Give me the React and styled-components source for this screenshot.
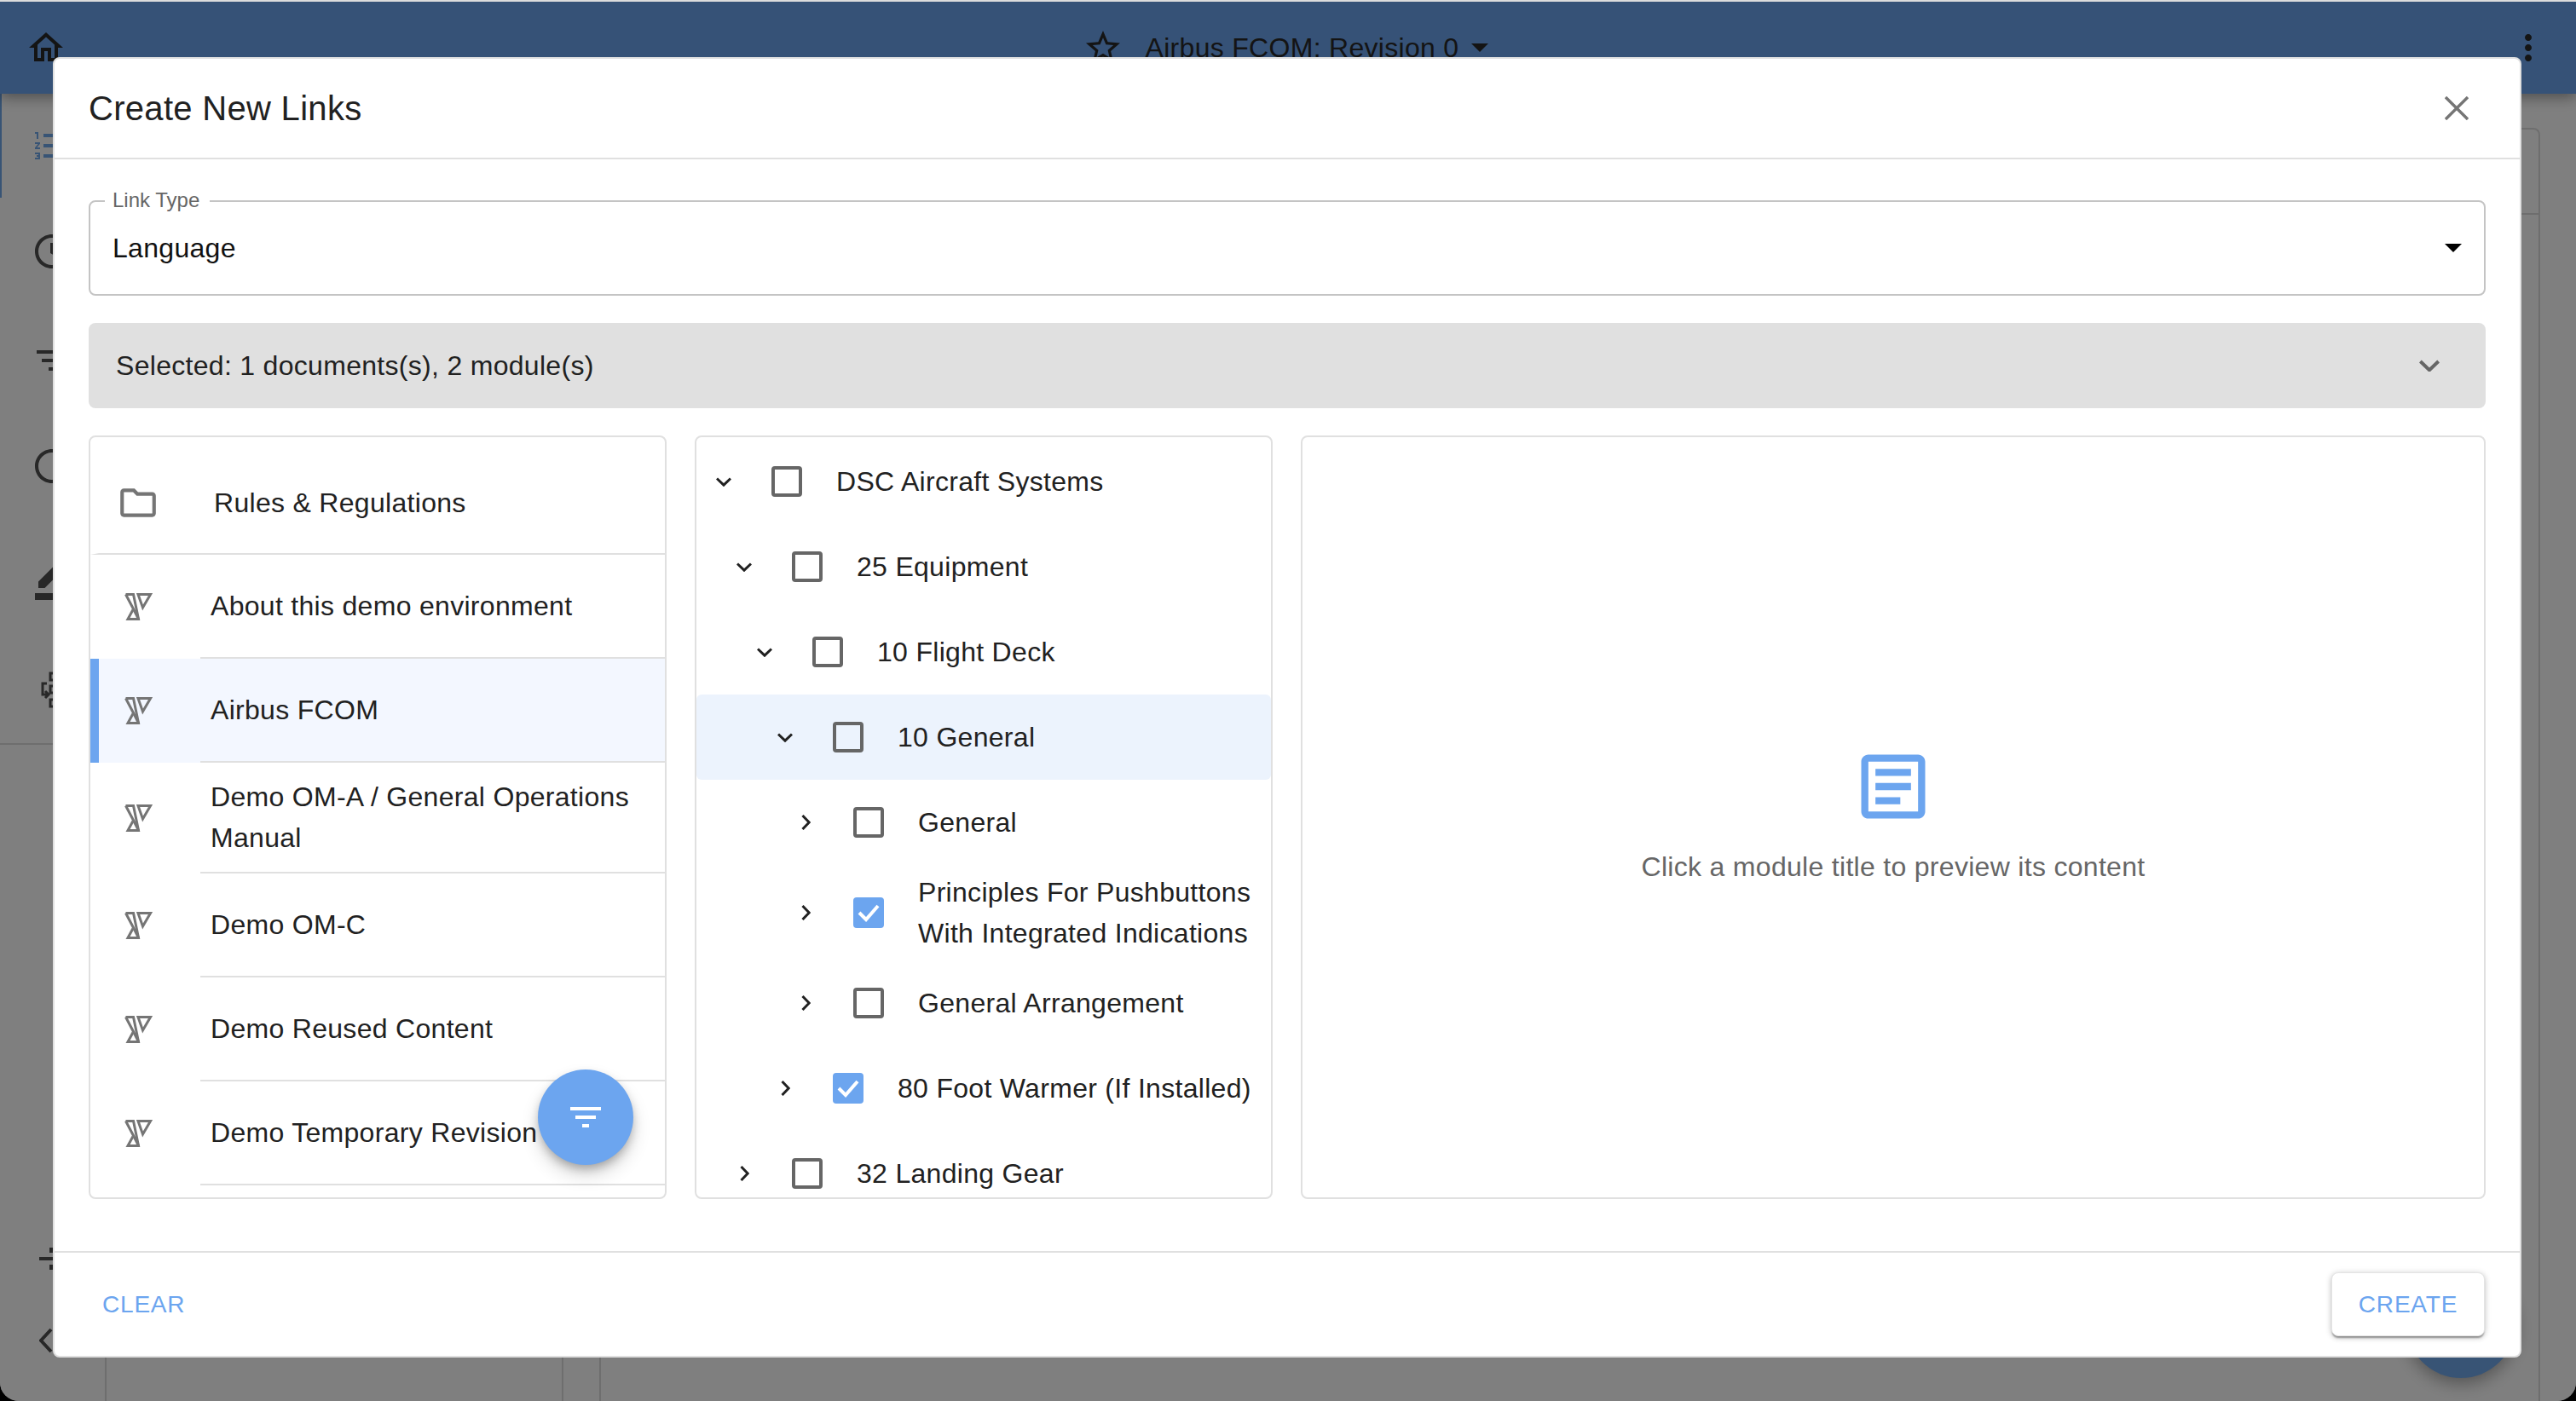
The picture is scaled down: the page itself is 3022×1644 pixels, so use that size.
import React from "react";
import styled, { createGlobalStyle } from "styled-components";

const GlobalStyle = createGlobalStyle`
  * {
    margin: 0;
    padding: 0;
    box-sizing: border-box;
  }

  html, body {
    width: 3022px;
    height: 1644px;
    overflow: hidden;
    background: #000;
    font-family: "Liberation Sans", Arial, sans-serif;
    color: #212121;
  }
`;

const blue = "#6ca5ef";
const line = "#e0e0e0";

const Page = styled.div`
  position: relative;
  width: 3022px;
  height: 1644px;
  display: flex;
  flex-direction: column;
  overflow: hidden;
  background: #fff;
  border-top: 2px solid #dcdcdc;
  border-radius: 0 0 22px 22px;
`;

const AppBar = styled.header`
  height: 108px;
  flex: none;
  display: flex;
  align-items: center;
  justify-content: space-between;
  padding: 0 32px 0 30px;
  background: ${blue};
  color: #282828;
  box-shadow: 0 4px 16px rgba(0, 0, 0, 0.4);
  position: relative;
`;

const DocTitle = styled.div`
  display: flex;
  align-items: center;
  margin-right: 4px;
  font-size: 32px;
  letter-spacing: 0.3px;

  span {
    margin: 0 15px 0 26px;
  }
`;

const Main = styled.main`
  flex: 1;
  display: flex;
  min-height: 0;
`;

const Sidebar = styled.nav`
  width: 125px;
  flex: none;
  display: flex;
  flex-direction: column;
  border-right: 2px solid #dcdcdc;
`;

const SideItem = styled.div`
  height: ${(p) => p.$h}px;
  flex: none;
  display: flex;
  align-items: center;
  padding-left: 35px;
  color: ${(p) => (p.$active ? "#70a8ea" : "#505050")};
  border-left: 2px solid ${(p) => (p.$active ? "#70a8ea" : "transparent")};
`;

const SideFoot = styled.div`
  margin-top: 8px;
  border-top: 2px solid #dcdcdc;
  flex: 1;
  display: flex;
  flex-direction: column;
  justify-content: flex-end;
  padding: 0 0 56px 46px;
  gap: 66px;
  color: #505050;
`;

const ListColumn = styled.section`
  width: 536px;
  flex: none;
  border-right: 2px solid #dcdcdc;
`;

const ContentCard = styled.section`
  flex: 1;
  margin: 40px 42px 0;
  border: 2px solid #dcdcdc;
  border-bottom: 0;
  border-radius: 8px 8px 0 0;
`;

const CardHead = styled.div`
  height: 100px;
  border-bottom: 2px solid #dcdcdc;
`;

const PageFab = styled.div`
  position: absolute;
  left: 2823px;
  top: 1487px;
  width: 128px;
  height: 128px;
  border-radius: 50%;
  background: #70a8ea;
  box-shadow: 0 6px 20px rgba(0, 0, 0, 0.35);
`;

const Backdrop = styled.div`
  position: absolute;
  inset: 0;
  display: flex;
  padding: 65px 64px 51px 62px;
  background: rgba(0, 0, 0, 0.5);
`;

const Dialog = styled.div`
  flex: 1;
  display: flex;
  flex-direction: column;
  background: #fff;
  border: 2px solid ${line};
  border-radius: 8px;
`;

const DialogHead = styled.div`
  height: 118px;
  flex: none;
  display: flex;
  align-items: center;
  justify-content: space-between;
  padding: 0 60px 0 40px;
  border-bottom: 2px solid ${line};

  h2 {
    font-size: 40px;
    font-weight: 400;
    letter-spacing: 0.3px;
  }
`;

const DialogBody = styled.div`
  flex: none;
  display: flex;
  flex-direction: column;
  gap: 32px;
  padding: 48px 40px 0;
`;

const SelectField = styled.div`
  position: relative;
  height: 112px;
  flex: none;
  display: flex;
  align-items: center;
  justify-content: space-between;
  padding: 0 26px 0 26px;
  border: 2px solid #c4c4c4;
  border-radius: 8px;
  font-size: 32px;
  letter-spacing: 0.3px;
  color: #111;

  legend {
    position: absolute;
    left: 17px;
    top: -18px;
    padding: 0 12px 0 9px;
    background: #fff;
    font-size: 24px;
    line-height: 32px;
    letter-spacing: 0;
    color: #666;
  }
`;

const Caret = styled.i`
  width: 0;
  height: 0;
  border-left: 10px solid transparent;
  border-right: 10px solid transparent;
  border-top: 10px solid ${(p) => p.$color || "#000"};
`;

const SummaryBar = styled.div`
  height: 100px;
  flex: none;
  display: flex;
  align-items: center;
  justify-content: space-between;
  padding: 0 54px 0 32px;
  background: ${line};
  border-radius: 8px;
  font-size: 32px;
  letter-spacing: 0.3px;
`;

const Panels = styled.div`
  height: 896px;
  flex: none;
  display: grid;
  grid-template-columns: 678px 678px 1fr;
  gap: 33px;
`;

const Panel = styled.div`
  position: relative;
  border: 2px solid ${line};
  border-radius: 8px;
  overflow: hidden;
  min-width: 0;
`;

const DocRow = styled.div`
  display: flex;
  align-items: stretch;
  height: ${(p) => p.$h}px;
  padding-top: ${(p) => (p.$full ? "17px" : "0")};
  background: ${(p) => (p.$selected ? "#f3f7ff" : "transparent")};
  border-left: 10px solid ${(p) => (p.$selected ? blue : "transparent")};
  border-bottom: ${(p) => (p.$full ? `2px solid ${line}` : "0")};
`;

const DocIcon = styled.div`
  width: ${(p) => (p.$wide ? 145 : 129)}px;
  flex: none;
  display: flex;
  align-items: center;
  padding-left: ${(p) => (p.$wide ? 31 : 39)}px;
  margin-left: -10px;
`;

const DocLabel = styled.div`
  flex: 1;
  display: flex;
  align-items: center;
  padding: 0 24px 0 ${(p) => (p.$wide ? 0 : 12)}px;
  font-size: 32px;
  line-height: 48px;
  letter-spacing: 0.3px;
  border-bottom: ${(p) => (p.$full ? "0" : `2px solid ${line}`)};
`;

const FilterFab = styled.button`
  position: absolute;
  left: 525px;
  top: 742px;
  width: 112px;
  height: 112px;
  border: 0;
  border-radius: 50%;
  display: flex;
  align-items: center;
  justify-content: center;
  background: ${blue};
  color: #fff;
  box-shadow: 0 6px 12px -2px rgba(0, 0, 0, 0.3), 0 12px 20px 2px rgba(0, 0, 0, 0.12);
`;

const TreeList = styled.div`
  padding-top: 2px;
`;

const TreeRow = styled.div`
  display: flex;
  align-items: center;
  min-height: ${(p) => (p.$tall ? 112 : 100)}px;
  padding: 0 16px 0 ${(p) => 16 + p.$level * 24}px;
  background: ${(p) => (p.$selected ? "#ecf3fd" : "transparent")};
  border-radius: 6px;
`;

const Chevron = styled.div`
  width: 32px;
  flex: none;
  display: flex;
  justify-content: center;
  color: #212121;
`;

const Box = styled.div`
  width: 36px;
  height: 36px;
  flex: none;
  margin: 0 40px 0 40px;
  display: flex;
  align-items: center;
  justify-content: center;
  border-radius: 4px;
  border: ${(p) => (p.$checked ? "0" : "4px solid #666")};
  background: ${(p) => (p.$checked ? blue : "transparent")};
`;

const TreeLabel = styled.div`
  font-size: 32px;
  line-height: 48px;
  letter-spacing: 0.3px;
`;

const Preview = styled.div`
  height: 100%;
  display: flex;
  flex-direction: column;
  align-items: center;
  justify-content: center;
  gap: 20px;
  padding-bottom: 4px;
  color: ${blue};

  p {
    font-size: 32px;
    line-height: 48px;
    letter-spacing: 0.3px;
    color: #666;
  }
`;

const DialogFoot = styled.div`
  margin-top: 61px;
  flex: 1;
  display: flex;
  align-items: center;
  justify-content: space-between;
  padding: 0 41px 0 56px;
  border-top: 2px solid ${line};
`;

const TextButton = styled.button`
  padding: 0;
  border: ${(p) => (p.$raised ? "1px solid #e4e4e4" : "0")};
  background: #fff;
  width: ${(p) => (p.$raised ? "180px" : "auto")};
  height: 75px;
  border-radius: 8px;
  font-family: inherit;
  font-size: 28px;
  letter-spacing: 0.8px;
  color: ${blue};
  box-shadow: ${(p) =>
    p.$raised
      ? "0 3px 2px -1px rgba(0,0,0,.35), 0 2px 6px 0 rgba(0,0,0,.14), 0 1px 8px 0 rgba(0,0,0,.12)"
      : "none"};
`;

const Icon = ({ d, size = 48, color = "currentColor" }) => (
  <svg width={size} height={size} viewBox="0 0 24 24" fill={color} style={{ flex: "none" }}>
    <path d={d} />
  </svg>
);

const icons = {
  home: "M12 5.69l5 4.5V18h-2v-6H9v6H7v-7.81l5-4.5M12 3L2 12h3v8h6v-6h2v6h6v-8h3L12 3z",
  star: "M22 9.24l-7.19-.62L12 2 9.19 8.63 2 9.24l5.46 4.73L5.82 21 12 17.27 18.18 21l-1.63-7.03L22 9.24zM12 15.4l-3.76 2.27 1-4.28-3.32-2.88 4.38-.38L12 6.1l1.71 4.04 4.38.38-3.32 2.88 1 4.28L12 15.4z",
  more: "M12 8c1.1 0 2-.9 2-2s-.9-2-2-2-2 .9-2 2 .9 2 2 2zm0 2c-1.1 0-2 .9-2 2s.9 2 2 2 2-.9 2-2-.9-2-2-2zm0 6c-1.1 0-2 .9-2 2s.9 2 2 2 2-.9 2-2-.9-2-2-2z",
  numbered: "M2 17h2v.5H3v1h1v.5H2v1h3v-4H2zm1-9h1V4H2v1h1v3zm-1 3h1.8L2 13.1v.9h3v-1H3.2L5 10.9V10H2v1zm5-6v2h14V5H7zm0 14h14v-2H7v2zm0-6h14v-2H7v2z",
  clock: "M11.99 2C6.47 2 2 6.48 2 12s4.47 10 9.99 10C17.52 22 22 17.52 22 12S17.52 2 11.99 2zM12 20c-4.42 0-8-3.58-8-8s3.58-8 8-8 8 3.58 8 8-3.58 8-8 8zm.5-13H11v6l5.25 3.15.75-1.23-4.5-2.67z",
  filter: "M10 18h4v-2h-4v2zM3 6v2h18V6H3zm3 7h12v-2H6v2z",
  circle: "M12 2C6.48 2 2 6.48 2 12s4.48 10 10 10 10-4.48 10-10S17.52 2 12 2zm0 18c-4.41 0-8-3.59-8-8s3.59-8 8-8 8 3.59 8 8-3.59 8-8 8z",
  pen: "M17.75 7 14 3.25l-10 10V17h3.75l10-10zm2.96-2.96c.39-.39.39-1.02 0-1.41L18.37.29a.996.996 0 0 0-1.41 0L15 2.25 18.75 6l1.96-1.96zM2 20h20v4H2z",
  folder: "M9.17 6l2 2H20v10H4V6h5.17M10 4H4c-1.1 0-1.99.9-1.99 2L2 18c0 1.1.9 2 2 2h16c1.1 0 2-.9 2-2V8c0-1.1-.9-2-2-2h-8l-2-2z",
  article: "M19 5v14H5V5h14m0-2H5c-1.1 0-2 .9-2 2v14c0 1.1.9 2 2 2h14c1.1 0 2-.9 2-2V5c0-1.1-.9-2-2-2z M14 17H7v-2h7v2zm3-4H7v-2h10v2zm0-4H7V7h10v2z",
};

// the product mark used in front of each document
const DocMark = () => (
  <svg width="34" height="32" viewBox="0 0 34 32" fill="none" stroke="#757575" strokeWidth="3">
    <path d="M2.5 1.5H11.5L17.5 30.5H5L11 19.5" />
    <path d="M2.5 1.5L12 19.5L17.5 30.5" />
    <path d="M17 1.5H31.5L22.5 17Z" />
  </svg>
);

// arrow into a stack of three nodes, as in the side rail
const TreeMark = () => (
  <svg width="48" height="48" viewBox="0 0 48 48" fill="none" stroke="currentColor" strokeWidth="3">
    <path d="M22 5h8v8h-8zM22 20h8v8h-8zM22 36h8v8h-8z" />
    <path d="M18 17H13V30H20M16 26l4 4-4 4" />
  </svg>
);

const ChevronDown = ({ size = 18, color = "currentColor" }) => (
  <svg width={size} height={(size * 11) / 18} viewBox="0 0 18 11" fill="none" stroke={color} strokeWidth="3">
    <path d="M1 1.5L9 9.2L17 1.5" />
  </svg>
);

const ChevronRight = () => (
  <svg width="11" height="18" viewBox="0 0 11 18" fill="none" stroke="currentColor" strokeWidth="3">
    <path d="M1.5 1L9.2 9L1.5 17" />
  </svg>
);

const docs = [
  { label: "About this demo environment", h: 122 },
  { label: "Airbus FCOM", h: 122, selected: true },
  { label: "Demo OM-A / General Operations Manual", h: 130 },
  { label: "Demo OM-C", h: 122 },
  { label: "Demo Reused Content", h: 122 },
  { label: "Demo Temporary Revision", h: 122 },
];

const tree = [
  { label: "DSC Aircraft Systems", level: 0, open: true },
  { label: "25 Equipment", level: 1, open: true },
  { label: "10 Flight Deck", level: 2, open: true },
  { label: "10 General", level: 3, open: true, selected: true },
  { label: "General", level: 4 },
  { label: "Principles For Pushbuttons With Integrated Indications", level: 4, checked: true, tall: true },
  { label: "General Arrangement", level: 4 },
  { label: "80 Foot Warmer (If Installed)", level: 3, checked: true },
  { label: "32 Landing Gear", level: 1 },
];

export default function App() {
  return (
    <>
      <GlobalStyle />
      <Page>
        <AppBar>
          <Icon d={icons.home} />
          <DocTitle>
            <Icon d={icons.star} size={48} />
            <span>Airbus FCOM: Revision 0</span>
            <Caret $color="#282828" />
          </DocTitle>
          <Icon d={icons.more} />
        </AppBar>
        <Main>
          <Sidebar>
            <SideItem $h={122} $active>
              <Icon d={icons.numbered} />
            </SideItem>
            <SideItem $h={126}>
              <Icon d={icons.clock} />
            </SideItem>
            <SideItem $h={130}>
              <Icon d={icons.filter} />
            </SideItem>
            <SideItem $h={118}>
              <Icon d={icons.circle} />
            </SideItem>
            <SideItem $h={148}>
              <Icon d={icons.pen} />
            </SideItem>
            <SideItem $h={110}>
              <TreeMark />
            </SideItem>
            <SideFoot>
              <svg width="16" height="30" viewBox="0 0 16 30" fill="none" stroke="currentColor" strokeWidth="4">
                <path d="M0 15H16M14 2V8M14 22V28" />
              </svg>
              <svg width="16" height="30" viewBox="0 0 16 30" fill="none" stroke="currentColor" strokeWidth="4">
                <path d="M14 2L2 15L14 28" />
              </svg>
            </SideFoot>
          </Sidebar>
          <ListColumn />
          <ContentCard>
            <CardHead />
          </ContentCard>
        </Main>
        <PageFab />
        <Backdrop>
          <Dialog>
            <DialogHead>
              <h2>Create New Links</h2>
              <svg width="28" height="28" viewBox="0 0 28 28" fill="none" stroke="#757575" strokeWidth="3.4">
                <path d="M1 1L27 27M27 1L1 27" />
              </svg>
            </DialogHead>
            <DialogBody>
              <SelectField>
                <legend>Link Type</legend>
                Language
                <Caret />
              </SelectField>
              <SummaryBar>
                Selected: 1 documents(s), 2 module(s)
                <ChevronDown size={24} color="#666" />
              </SummaryBar>
              <Panels>
                <Panel>
                  <DocRow $h={138} $full>
                    <DocIcon $wide>
                      <Icon d={icons.folder} size={50} color="#757575" />
                    </DocIcon>
                    <DocLabel $wide $full>
                      Rules &amp; Regulations
                    </DocLabel>
                  </DocRow>
                  {docs.map((doc) => (
                    <DocRow key={doc.label} $h={doc.h} $selected={doc.selected}>
                      <DocIcon>
                        <DocMark />
                      </DocIcon>
                      <DocLabel>{doc.label}</DocLabel>
                    </DocRow>
                  ))}
                  <FilterFab>
                    <Icon d={icons.filter} />
                  </FilterFab>
                </Panel>
                <Panel>
                  <TreeList>
                    {tree.map((node) => (
                      <TreeRow key={node.label} $level={node.level} $selected={node.selected} $tall={node.tall}>
                        <Chevron>{node.open ? <ChevronDown /> : <ChevronRight />}</Chevron>
                        <Box $checked={node.checked}>
                          {node.checked && (
                            <svg width="28" height="24" viewBox="0 0 28 24" fill="none" stroke="#fff" strokeWidth="4">
                              <path d="M3 12L11 20L25 4" />
                            </svg>
                          )}
                        </Box>
                        <TreeLabel>{node.label}</TreeLabel>
                      </TreeRow>
                    ))}
                  </TreeList>
                </Panel>
                <Panel>
                  <Preview>
                    <Icon d={icons.article} size={100} />
                    <p>Click a module title to preview its content</p>
                  </Preview>
                </Panel>
              </Panels>
            </DialogBody>
            <DialogFoot>
              <TextButton>CLEAR</TextButton>
              <TextButton $raised>CREATE</TextButton>
            </DialogFoot>
          </Dialog>
        </Backdrop>
      </Page>
    </>
  );
}
